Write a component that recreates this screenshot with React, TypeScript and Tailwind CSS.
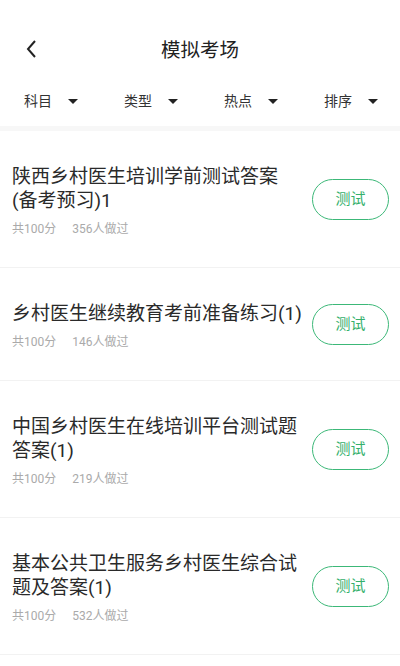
import React from "react";

const filters = ["科目", "类型", "热点", "排序"];

const exams = [
  { title: "陕西乡村医生培训学前测试答案(备考预习)1", score: 100, count: 356 },
  { title: "乡村医生继续教育考前准备练习(1)", score: 100, count: 146 },
  { title: "中国乡村医生在线培训平台测试题答案(1)", score: 100, count: 219 },
  { title: "基本公共卫生服务乡村医生综合试题及答案(1)", score: 100, count: 532 },
];

function Caret() {
  return (
    <svg width="10" height="5" viewBox="0 0 10 5" className="ml-[16px]">
      <polygon points="0,0 10,0 5,5" fill="#222" />
    </svg>
  );
}

export default function App() {
  return (
    <div
      className="w-[400px] h-[666px] overflow-hidden bg-white"
      style={{ fontFamily: 'Roboto, "Noto Sans CJK SC", sans-serif' }}
    >
      {/* header */}
      <div className="relative h-[76px] pt-[40px]">
        <svg
          width="14"
          height="18"
          viewBox="0 0 14 18"
          className="absolute left-[25px] top-[40px]"
        >
          <polyline points="10,1 3,9 10,17" fill="none" stroke="#222" strokeWidth="2" />
        </svg>
        <div className="text-center text-[19.5px] leading-[22px] text-[#222]">模拟考场</div>
      </div>

      {/* filters */}
      <div className="grid grid-cols-4 h-[50px] items-center">
        {filters.map((f) => (
          <div key={f} className="flex items-center pl-[24px] text-[14px] text-[#333]">
            {f}
            <Caret />
          </div>
        ))}
      </div>
      <div className="h-[5px] bg-[#f7f7f7]" />

      {/* list */}
      <div>
        {exams.map((e) => (
          <div
            key={e.title}
            className="flex items-center justify-between pl-[12px] pr-[11px] py-[32px] border-b border-[#f2f2f2]"
          >
            <div className="relative top-[2px] w-[290px]">
              <div className="text-[19px] leading-[24px] text-[#2a2a2a]">{e.title}</div>
              <div className="mt-[8px] flex gap-[16px] text-[12px] leading-[16px] text-[#aaa]">
                <span>共{e.score}分</span>
                <span>{e.count}人做过</span>
              </div>
            </div>
            <button className="w-[77px] h-[41px] rounded-full border-[1.5px] border-[#3cb878] text-[15px] text-[#34b06c]">
              测试
            </button>
          </div>
        ))}
      </div>
    </div>
  );
}
